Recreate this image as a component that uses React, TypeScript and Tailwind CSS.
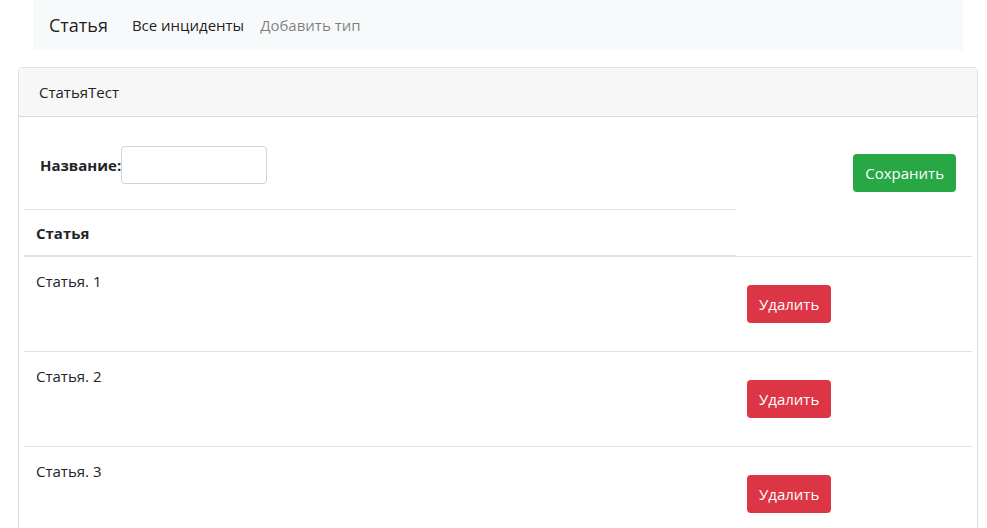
export default function App() {
  const items = ["Статья. 1", "Статья. 2", "Статья. 3"];

  return (
    <div className="min-h-screen bg-white text-[#212529] text-[15px] leading-6" style={{ fontFamily: '"Open Sans", "Noto Sans", sans-serif' }}>
      {/* navbar */}
      <nav className="mx-[33px] w-[930px] h-[50px] bg-[#f8f9fa] flex items-center px-4">
        <span className="text-[18px] text-black/90 mr-4">Статья</span>
        <a className="px-2 text-black/90">Все инциденты</a>
        <a className="px-2 text-black/50">Добавить тип</a>
      </nav>

      <div className="mt-[17px] ml-[18px] w-[960px] border border-black/[.125] rounded">
        <div className="h-[49px] flex items-center px-5 bg-[#f7f7f7] border-b border-black/[.125]">
          СтатьяТест
        </div>

        <div className="px-[5px]">
          <div className="flex">
            {/* left column: form + table head */}
            <div className="w-[712px]">
              <div className="h-[92px] flex items-start pt-[29px] pl-4">
                <label className="font-bold mt-[7px]">Название:</label>
                <input className="w-[146px] h-[38px] border border-[#ced4da] rounded" />
              </div>
              <div className="h-[47px] border-t border-b border-[#dee2e6] flex items-center px-3 font-bold">
                Статья
              </div>
            </div>
            {/* right column: save button */}
            <div className="flex-1 flex justify-end pr-4 pt-[37px]">
              <button className="h-[38px] px-3 rounded bg-[#28a745] text-white">Сохранить</button>
            </div>
          </div>

          {items.map((name) => (
            <div key={name} className="h-[95px] border-t border-[#dee2e6] flex">
              <div className="w-[712px] px-3 pt-[12px]">{name}</div>
              <div className="pl-[11px] pt-[28px]">
                <button className="h-[38px] px-3 rounded bg-[#dc3545] text-white">Удалить</button>
              </div>
            </div>
          ))}
        </div>
      </div>
    </div>
  );
}
